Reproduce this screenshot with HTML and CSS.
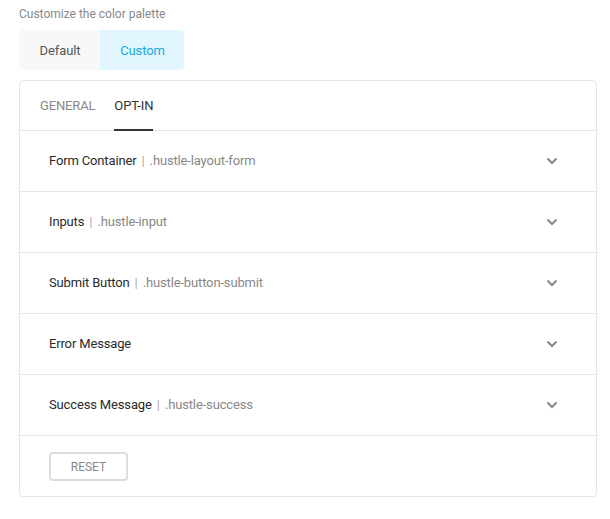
FILE: index.html
```html
<!DOCTYPE html>
<html>
<head>
<meta charset="utf-8">
<link rel="stylesheet" href="styles.css">
</head>
<body>
<div class="page">
  <div class="label">Customize the color palette</div>
  <div class="switch">
    <div class="switch-item">Default</div>
    <div class="switch-item active">Custom</div>
  </div>
  <div class="box">
    <div class="tabs">
      <div class="tab">GENERAL</div>
      <div class="tab current">OPT-IN</div>
    </div>
    <div class="row"><div class="title">Form Container <span class="sep">|</span> <span class="cls">.hustle-layout-form</span></div><svg class="chev" width="12" height="8" viewBox="0 0 12 8"><path d="M1.5 1.5 L6 6 L10.5 1.5" fill="none" stroke="#888" stroke-width="2"/></svg></div>
    <div class="row"><div class="title">Inputs <span class="sep">|</span> <span class="cls">.hustle-input</span></div><svg class="chev" width="12" height="8" viewBox="0 0 12 8"><path d="M1.5 1.5 L6 6 L10.5 1.5" fill="none" stroke="#888" stroke-width="2"/></svg></div>
    <div class="row"><div class="title">Submit Button <span class="sep">|</span> <span class="cls">.hustle-button-submit</span></div><svg class="chev" width="12" height="8" viewBox="0 0 12 8"><path d="M1.5 1.5 L6 6 L10.5 1.5" fill="none" stroke="#888" stroke-width="2"/></svg></div>
    <div class="row"><div class="title">Error Message</div><svg class="chev" width="12" height="8" viewBox="0 0 12 8"><path d="M1.5 1.5 L6 6 L10.5 1.5" fill="none" stroke="#888" stroke-width="2"/></svg></div>
    <div class="row"><div class="title">Success Message <span class="sep">|</span> <span class="cls">.hustle-success</span></div><svg class="chev" width="12" height="8" viewBox="0 0 12 8"><path d="M1.5 1.5 L6 6 L10.5 1.5" fill="none" stroke="#888" stroke-width="2"/></svg></div>
    <div class="footer"><button class="reset">RESET</button></div>
  </div>
</div>
</body>
</html>
```
FILE: styles.css
```css
html, body { margin: 0; padding: 0; background: #fff; }
body { font-family: Roboto, "Noto Sans", sans-serif; color: #333; }
.page { padding: 6px 13px 0 19px; }
.label { font-size: 12px; color: #888; line-height: 16px; height: 16px; }
.switch { display: inline-flex; margin-top: 8px; border-radius: 4px; overflow: hidden; height: 40px; }
.switch-item { display: flex; align-items: center; justify-content: center; font-size: 13px; font-weight: 400; color: #555; background: #f8f8f8; letter-spacing: -0.1px; padding-left: 1px; box-sizing: border-box; }
.switch-item:first-child { width: 81px; }
.switch-item.active { width: 84px; background: #e1f6ff; color: #17a8e3; }
.box { margin-top: 10px; border: 1px solid #e6e6e6; border-radius: 4px; width: 576px; }
.tabs { display: flex; gap: 19px; padding: 0 20px; border-bottom: 1px solid #e6e6e6; height: 49px; }
.tab { font-size: 13px; font-weight: 400; color: #888; display: flex; align-items: center; border-bottom: 2px solid transparent; margin-bottom: -1px; letter-spacing: -0.15px; }
.tab.current { color: #333; border-bottom-color: #333; }
.row { border-bottom: 1px solid #e6e6e6; display: flex; align-items: center; justify-content: space-between; padding: 0 39px 1px 29px; box-sizing: border-box; height: 61px; }
.title { font-size: 13px; font-weight: 400; color: #2a2a2a; letter-spacing: -0.15px; }
.sep { color: #aaa; margin: 0 2px; }
.cls { color: #888; }
.chev { display: block; margin-right: -1px; }
.footer { padding: 16px 29px 15px; }
.reset { font-family: Roboto, sans-serif; width: 79px; height: 29px; border: 2px solid #ddd; border-radius: 4px; background: #fff; font-size: 12px; font-weight: 400; color: #888; padding: 0; }
```
